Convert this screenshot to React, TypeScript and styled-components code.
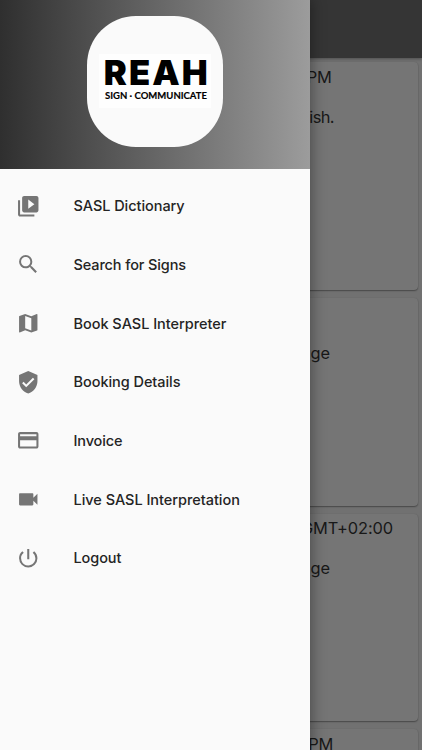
import React from "react";
import styled, { createGlobalStyle } from "styled-components";
import {
  MdVideoLibrary,
  MdSearch,
  MdMap,
  MdVerifiedUser,
  MdPayment,
  MdVideocam,
  MdPowerSettingsNew,
} from "react-icons/md";

const GlobalStyle = createGlobalStyle`
  * { box-sizing: border-box; }
  html, body, #root { height: 100%; }
  body { margin: 0; overflow: hidden; font-family: Inter, "Liberation Sans", sans-serif; }
`;

const Screen = styled.div`
  position: relative;
  width: 422px;
  height: 750px;
  overflow: hidden;
  background: #717171;
`;

const Page = styled.main`
  display: flex;
  flex-direction: column;
  height: 100%;
`;

const AppBar = styled.header`
  flex: none;
  height: 58px;
  background: #353535;
  box-shadow: 0 1px 3px rgba(0, 0, 0, 0.3);
`;

const Cards = styled.section`
  display: flex;
  flex-direction: column;
  gap: 8px;
  padding: 4px 4px 0;
`;

const Card = styled.article<{ $height: number; $top: number }>`
  flex: none;
  height: ${(p) => p.$height}px;
  padding-top: ${(p) => p.$top}px;
  border-radius: 4px;
  background: #757575;
  box-shadow: 0 1px 1.5px rgba(0, 0, 0, 0.36), 0 0 1px rgba(0, 0, 0, 0.14);
`;

const Line = styled.p<{ $right: number; $gap?: number; $spacing?: number }>`
  margin: ${(p) => p.$gap ?? 0}px 0 0;
  height: 26px;
  padding-right: ${(p) => p.$right}px;
  text-align: right;
  font-size: 16.4px;
  line-height: 26px;
  letter-spacing: ${(p) => p.$spacing ?? 0}px;
  color: #181818;
`;

const Drawer = styled.aside`
  position: absolute;
  inset: 0 auto 0 0;
  width: 309.5px;
  background: #fafafa;
  box-shadow: 0 0 14px 1px rgba(0, 0, 0, 0.4);
`;

const Banner = styled.div`
  display: flex;
  justify-content: center;
  height: 168.5px;
  padding-top: 16px;
  background: linear-gradient(90deg, #2f2f2f, #9c9c9c);
`;

const Badge = styled.div`
  display: flex;
  align-items: center;
  justify-content: center;
  width: 136.5px;
  height: 130.5px;
  border-radius: 49px;
  background: #fafafa;
`;

const Logo = styled.svg`
  display: block;
  width: 112px;
  height: 54px;
  background: #fefefe;
`;

const Menu = styled.nav`
  padding-top: 8px;
`;

const Item = styled.a`
  display: flex;
  align-items: center;
  height: 58.67px;
  padding-left: 16px;
  gap: 33px;
  color: #242424;
  font-size: 14.5px;
  font-weight: 500;
  white-space: nowrap;

  svg {
    flex: none;
    width: 24.5px;
    height: 24.5px;
    color: #757575;
  }
`;

const Label = styled.span<{ $spacing: number }>`
  letter-spacing: ${(p) => p.$spacing}px;
`;

const items = [
  { label: "SASL Dictionary", Icon: MdVideoLibrary, spacing: -0.05 },
  { label: "Search for Signs", Icon: MdSearch, spacing: -0.12 },
  { label: "Book SASL Interpreter", Icon: MdMap, spacing: -0.03 },
  { label: "Booking Details", Icon: MdVerifiedUser, spacing: -0.05 },
  { label: "Invoice", Icon: MdPayment, spacing: -0.15 },
  { label: "Live SASL Interpretation", Icon: MdVideocam, spacing: -0.03 },
  { label: "Logout", Icon: MdPowerSettingsNew, spacing: -0.1 },
];

export default function App() {
  return (
    <>
      <GlobalStyle />
      <Screen>
        <Page>
          <AppBar />
          <Cards>
            <Card $height={227.5} $top={2}>
              <Line $right={86.5} $spacing={-0.3}>PM</Line>
              <Line $right={84} $gap={14} $spacing={-0.6}>ish.</Line>
            </Card>
            <Card $height={208} $top={2}>
              <Line $right={88} $gap={40}>ge</Line>
            </Card>
            <Card $height={207.5} $top={1.4}>
              <Line $right={25} $spacing={-0.1}>GMT+02:00</Line>
              <Line $right={88} $gap={14}>ge</Line>
            </Card>
            <Card $height={208} $top={2}>
              <Line $right={85} $spacing={-0.3}>PM</Line>
            </Card>
          </Cards>
        </Page>
        <Drawer>
          <Banner>
            <Badge>
              <Logo viewBox="0 0 112 54" role="img" aria-label="REAH Sign Communicate">
                <text x="4.8" y="30.8" fontFamily="Inter, sans-serif" fontWeight="900" fontSize="34.6" textLength="104" lengthAdjust="spacing">REAH</text>
                <text x="6" y="45.2" fontFamily="Lato, sans-serif" fontWeight="700" fontSize="10" stroke="#000" strokeWidth="0.15" textLength="102" lengthAdjust="spacingAndGlyphs">SIGN · COMMUNICATE</text>
              </Logo>
            </Badge>
          </Banner>
          <Menu>
            {items.map(({ label, Icon, spacing }) => (
              <Item key={label}>
                <Icon />
                <Label $spacing={spacing}>{label}</Label>
              </Item>
            ))}
          </Menu>
        </Drawer>
      </Screen>
    </>
  );
}
